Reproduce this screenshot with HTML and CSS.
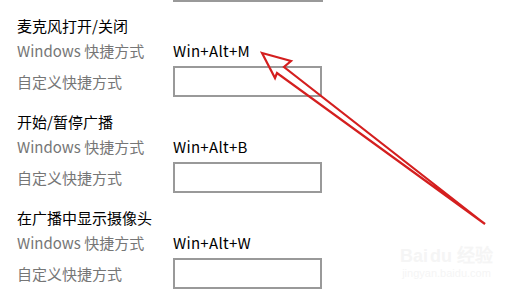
FILE: index.html
```html
<!DOCTYPE html>
<html lang="zh-CN">
<head>
<meta charset="utf-8">
<link rel="stylesheet" href="styles.css">
</head>
<body>
<div class="page">
  <div class="stub"></div>
  <section class="group">
    <div class="title">麦克风打开/关闭</div>
    <div class="grid">
      <div class="label">Windows 快捷方式</div>
      <div class="value">Win+Alt+M</div>
      <div class="label">自定义快捷方式</div>
      <div class="box"></div>
    </div>
  </section>
  <section class="group">
    <div class="title">开始/暂停广播</div>
    <div class="grid">
      <div class="label">Windows 快捷方式</div>
      <div class="value">Win+Alt+B</div>
      <div class="label">自定义快捷方式</div>
      <div class="box"></div>
    </div>
  </section>
  <section class="group">
    <div class="title">在广播中显示摄像头</div>
    <div class="grid">
      <div class="label">Windows 快捷方式</div>
      <div class="value">Win+Alt+W</div>
      <div class="label">自定义快捷方式</div>
      <div class="box"></div>
    </div>
  </section>
  <div class="watermark">
    <div class="wm-logo">Bai<span class="wm-du">du</span> 经验</div>
    <div class="wm-url">jingyan.baidu.com</div>
  </div>
  <svg class="arrow" width="517" height="295" viewBox="0 0 517 295">
    <polygon points="262,53 291,61 284,67 485,224 277,73 275,78" fill="none" stroke="#d41f1f" stroke-width="2.2" stroke-linejoin="miter"/>
  </svg>
</div>
</body>
</html>
```
FILE: styles.css
```css
html, body {
  margin: 0;
  padding: 0;
  background: #ffffff;
}
.page {
  position: relative;
  width: 517px;
  height: 295px;
  overflow: hidden;
  padding-left: 17px;
  box-sizing: border-box;
  font-family: "Noto Sans CJK SC", "Noto Sans", sans-serif;
  font-size: 15px;
}
.stub {
  margin-left: 156px;
  width: 150px;
  height: 2px;
  margin-bottom: -1px;
  background: #999;
}
.group {
  padding-top: 15px;
}
.title {
  height: 20px;
  line-height: 20px;
  color: #000;
  margin-bottom: 5px;
}
.grid {
  display: grid;
  grid-template-columns: 156px 149px;
  grid-template-rows: 20px 31px;
  row-gap: 5px;
  align-items: center;
}
.label {
  color: #767676;
  line-height: 20px;
}
.value {
  color: #000;
  line-height: 20px;
  letter-spacing: 0.3px;
}
.box {
  height: 31px;
  box-sizing: border-box;
  border: 2px solid #999;
  background: #fff;
}
.watermark {
  position: absolute;
  left: 400px;
  top: 246px;
  color: #f5f5f5;
  font-family: "Liberation Sans", sans-serif;
  text-align: center;
}
.wm-logo {
  font-size: 18px;
  font-weight: bold;
  line-height: 20px;
}
.wm-du {
  margin-left: 2px;
}
.wm-url {
  font-size: 11px;
  line-height: 14px;
}
.arrow {
  position: absolute;
  left: 0;
  top: 0;
  pointer-events: none;
}
```
